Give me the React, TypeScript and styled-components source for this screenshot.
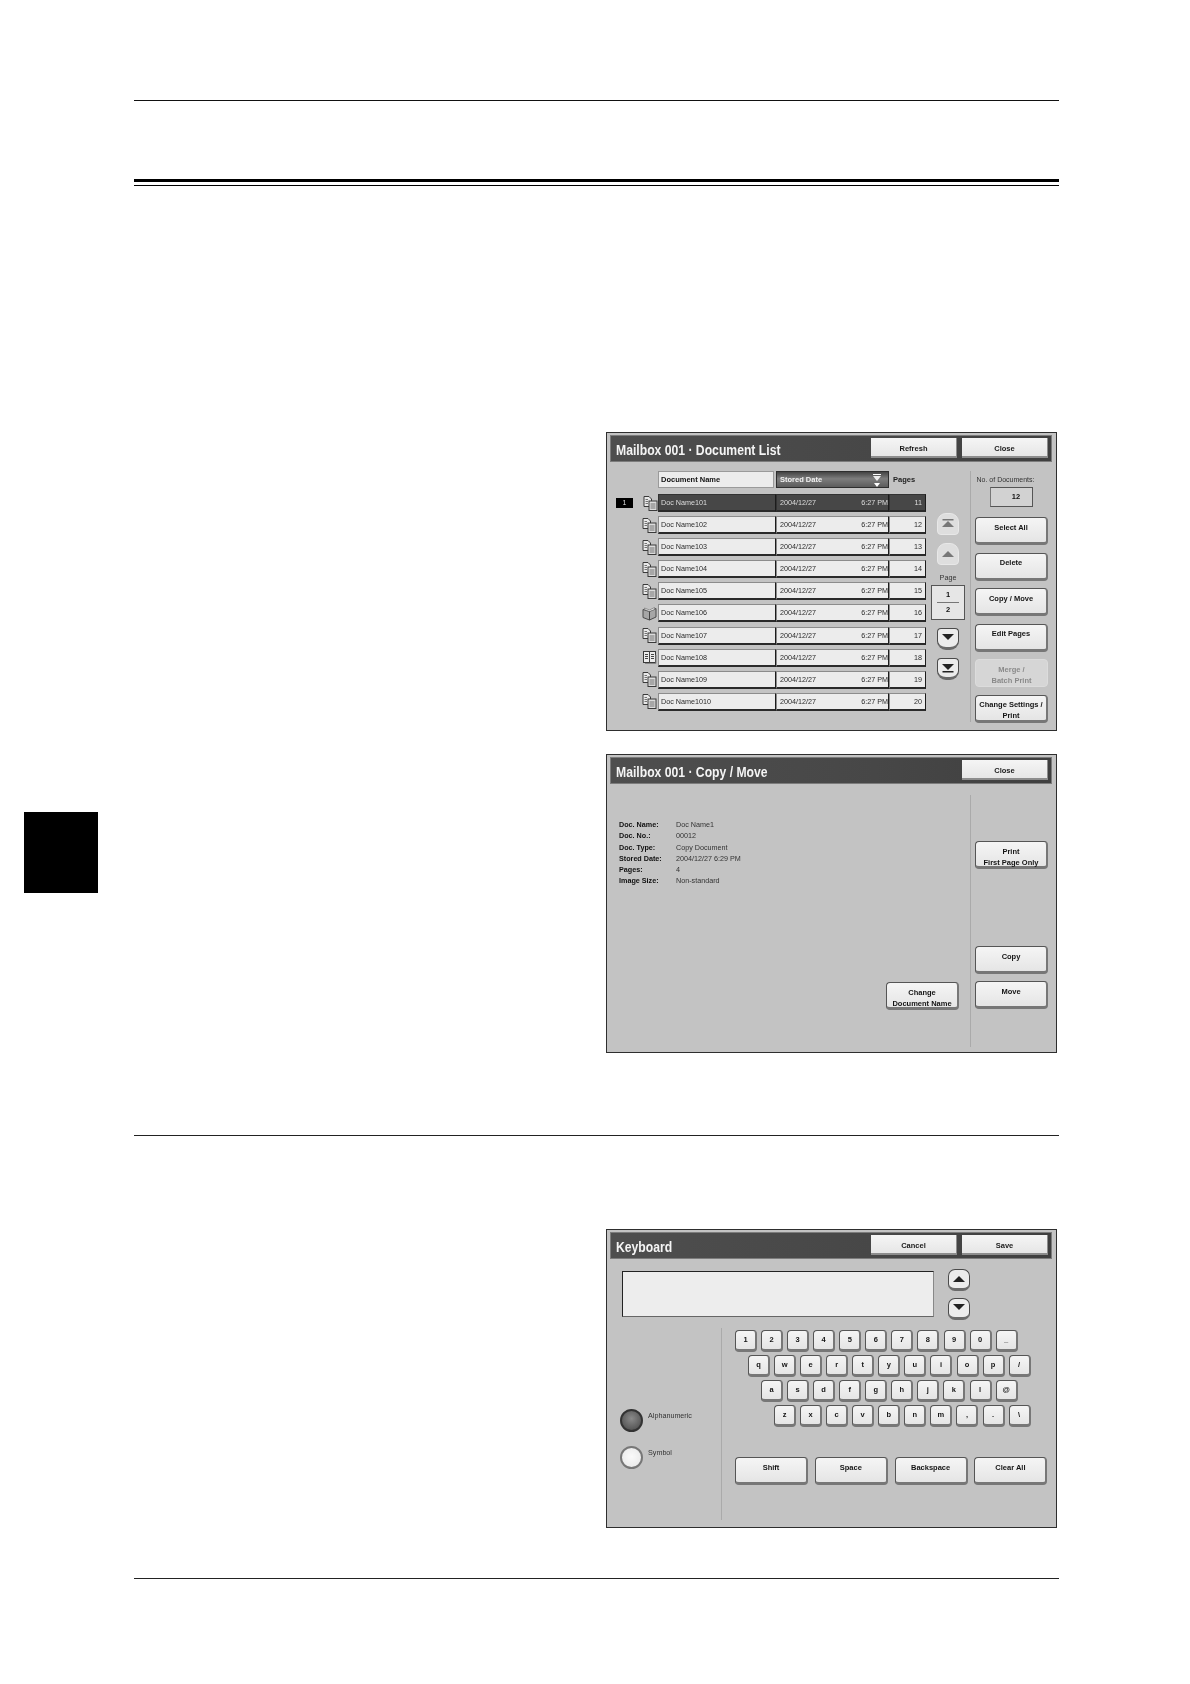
import React from 'react';
import styled, { createGlobalStyle } from 'styled-components';

const GlobalStyle = createGlobalStyle`
  html, body {
    margin: 0;
    padding: 0;
    background: #fff;
  }
  * {
    box-sizing: border-box;
  }
`;

const docs = [
  { name: 'Doc Name101', pages: 11, icon: 'copy' },
  { name: 'Doc Name102', pages: 12, icon: 'copy' },
  { name: 'Doc Name103', pages: 13, icon: 'copy' },
  { name: 'Doc Name104', pages: 14, icon: 'copy' },
  { name: 'Doc Name105', pages: 15, icon: 'copy' },
  { name: 'Doc Name106', pages: 16, icon: 'book' },
  { name: 'Doc Name107', pages: 17, icon: 'copy' },
  { name: 'Doc Name108', pages: 18, icon: 'split' },
  { name: 'Doc Name109', pages: 19, icon: 'copy' },
  { name: 'Doc Name1010', pages: 20, icon: 'copy' },
];

const sideActions = [
  { label: 'Select All' },
  { label: 'Delete' },
  { label: 'Copy / Move' },
  { label: 'Edit Pages' },
  { label: 'Merge /\nBatch Print', disabled: true },
  { label: 'Change Settings /\nPrint' },
];

const info = [
  ['Doc. Name:', 'Doc Name1'],
  ['Doc. No.:', '00012'],
  ['Doc. Type:', 'Copy Document'],
  ['Stored Date:', '2004/12/27 6:29 PM'],
  ['Pages:', '4'],
  ['Image Size:', 'Non-standard'],
];

const keyRows = ['1234567890_', 'qwertyuiop/', 'asdfghjkl@', 'zxcvbnm,.\\'];
const bigKeys = ['Shift', 'Space', 'Backspace', 'Clear All'];

function DocIcon({ kind }: { kind: string }) {
  if (kind === 'book') {
    return (
      <svg width="15" height="15" viewBox="0 0 15 15">
        <path d="M1 3.5 L7.5 5.5 L14 2.5 V11 L7.5 14 L1 11.5 Z" fill="#a6a6a6" stroke="#4a4a4a" strokeWidth="1" />
        <path d="M2.5 2 L7.5 4 L12.5 1.5 V3.5 L7.5 5.5 L2.5 3.5 Z" fill="#e8e8e8" stroke="#666" strokeWidth="0.6" />
        <path d="M7.5 5.5 V14" stroke="#444" strokeWidth="1" />
      </svg>
    );
  }
  if (kind === 'split') {
    return (
      <svg width="15" height="15" viewBox="0 0 15 15">
        <rect x="1.5" y="1.5" width="12" height="11" fill="#ececec" stroke="#3a3a3a" />
        <path d="M7.5 1.5 V12.5 M3 4.5 H6 M3 6.5 H6 M3 8.5 H6 M9 4.5 H12 M9 6.5 H12 M9 8.5 H12" stroke="#444" strokeWidth="1" />
        <path d="M3 13.5 H14 V5" fill="none" stroke="#888" strokeWidth="1" />
      </svg>
    );
  }
  return (
    <svg width="15" height="15" viewBox="0 0 15 15">
      <path d="M1 0.5 H6 L8.5 3 V10.5 H1 Z" fill="#e9e9e9" stroke="#3a3a3a" strokeWidth="1" />
      <path d="M2.5 3.5 H5 M2.5 5.5 H5 M2.5 7.5 H5" stroke="#555" strokeWidth="0.8" />
      <rect x="6" y="5" width="8" height="9.5" fill="#dcdcdc" stroke="#3a3a3a" />
      <path d="M7.5 8 H12.5 M7.5 10 H12.5 M7.5 12 H12.5" stroke="#555" strokeWidth="0.8" />
    </svg>
  );
}

function ArrowIcon({ dir, bar, color }: { dir: 'up' | 'down'; bar?: boolean; color: string }) {
  return (
    <svg width="14" height="12" viewBox="0 0 14 12">
      {dir === 'up' ? (
        <>
          {bar && <rect x="1.5" y="1" width="11" height="1.5" fill={color} />}
          <polygon points="7,3 13,9 1,9" fill={color} />
        </>
      ) : (
        <>
          <polygon points="1,2 13,2 7,8" fill={color} />
          {bar && <rect x="1.5" y="9" width="11" height="1.5" fill={color} />}
        </>
      )}
    </svg>
  );
}

function SortIcon() {
  return (
    <svg width="10" height="14" viewBox="0 0 10 14">
      <rect x="1" y="1" width="8" height="1" fill="#fff" />
      <polygon points="1,3 9,3 5,8" fill="#eee" />
      <polygon points="2,10 8,10 5,14" fill="#fff" />
    </svg>
  );
}

export default function App() {
  return (
    <Page>
      <GlobalStyle />
      <Gutter>
        <ChapterTab />
      </Gutter>
      <Column>
        <TopRule />
        <DoubleRule />

        <Panel $top={246}>
          <TitleBar>
            <TitleText>Mailbox 001 · Document List</TitleText>
            <BarButton>Refresh</BarButton>
            <BarButton>Close</BarButton>
          </TitleBar>
          <PanelBody>
            <ListArea>
              <HeaderRow>
                <NameHeader>Document Name</NameHeader>
                <DateHeader>
                  Stored Date
                  <SortIcon />
                </DateHeader>
                <PagesHeader>Pages</PagesHeader>
              </HeaderRow>
              {docs.map((doc, i) => (
                <DocRow key={doc.name}>
                  <MarkerSlot>{i === 0 && <Marker>1</Marker>}</MarkerSlot>
                  <IconSlot $selected={i === 0}>
                    <DocIcon kind={doc.icon} />
                  </IconSlot>
                  <NameCell $selected={i === 0}>{doc.name}</NameCell>
                  <DateCell $selected={i === 0}>
                    <span>2004/12/27</span>
                    <span>6:27 PM</span>
                  </DateCell>
                  <PagesCell $selected={i === 0}>{doc.pages}</PagesCell>
                </DocRow>
              ))}
            </ListArea>
            <NavColumn>
              <NavButton $shape="up" $disabled>
                <ArrowIcon dir="up" bar color="#777" />
              </NavButton>
              <NavButton $shape="up" $disabled>
                <ArrowIcon dir="up" color="#777" />
              </NavButton>
              <PageLabel>Page</PageLabel>
              <PageBox>
                <PageNumber $first>1</PageNumber>
                <PageNumber>2</PageNumber>
              </PageBox>
              <NavButton $shape="down">
                <ArrowIcon dir="down" color="#222" />
              </NavButton>
              <NavButton $shape="down">
                <ArrowIcon dir="down" bar color="#222" />
              </NavButton>
            </NavColumn>
            <SideColumn>
              <CountLabel>No. of Documents:</CountLabel>
              <CountBox>12</CountBox>
              <SideActions>
                {sideActions.map((a) => (
                  <ActionButton key={a.label} $disabled={a.disabled}>
                    {a.label}
                  </ActionButton>
                ))}
              </SideActions>
            </SideColumn>
          </PanelBody>
        </Panel>

        <Panel $top={23}>
          <TitleBar>
            <TitleText>Mailbox 001 · Copy / Move</TitleText>
            <BarButton>Close</BarButton>
          </TitleBar>
          <PanelBody>
            <DetailMain>
              <InfoGrid>
                {info.map(([label, value]) => (
                  <React.Fragment key={label}>
                    <InfoLabel>{label}</InfoLabel>
                    <InfoValue>{value}</InfoValue>
                  </React.Fragment>
                ))}
              </InfoGrid>
              <RenameButton>{'Change\nDocument Name'}</RenameButton>
            </DetailMain>
            <DetailSide>
              <PrintButton>{'Print\nFirst Page Only'}</PrintButton>
              <ActionButton>Copy</ActionButton>
              <MoveButton>Move</MoveButton>
            </DetailSide>
          </PanelBody>
        </Panel>

        <SectionRule />

        <Panel $top={93}>
          <TitleBar>
            <TitleText>Keyboard</TitleText>
            <BarButton>Cancel</BarButton>
            <BarButton>Save</BarButton>
          </TitleBar>
          <EntryRow>
            <EntryBox />
            <EntryScroll>
              <RoundButton>
                <ArrowIcon dir="up" color="#222" />
              </RoundButton>
              <RoundButton>
                <ArrowIcon dir="down" color="#222" />
              </RoundButton>
            </EntryScroll>
          </EntryRow>
          <KeyboardArea>
            <ModeColumn>
              <ModeOption>
                <Radio $on />
                <ModeLabel>Alphanumeric</ModeLabel>
              </ModeOption>
              <ModeOption>
                <Radio />
                <ModeLabel>Symbol</ModeLabel>
              </ModeOption>
            </ModeColumn>
            <KeysColumn>
              {keyRows.map((row, i) => (
                <KeyRow key={row} $indent={i * 13}>
                  {row.split('').map((k) => (
                    <Key key={k}>{k}</Key>
                  ))}
                </KeyRow>
              ))}
              <BigKeys>
                {bigKeys.map((k) => (
                  <ActionButton key={k}>{k}</ActionButton>
                ))}
              </BigKeys>
            </KeysColumn>
          </KeyboardArea>
        </Panel>

        <FooterRule />
      </Column>
    </Page>
  );
}

const Page = styled.div`
  display: flex;
  width: 1190px;
  min-height: 1684px;
  background: #fff;
  font-family: 'Liberation Sans', Arial, sans-serif;
`;

const Gutter = styled.div`
  width: 134px;
  padding: 812px 0 0 24px;
`;

const ChapterTab = styled.div`
  width: 74px;
  height: 81px;
  background: #000;
`;

const Column = styled.div`
  width: 925px;
  padding-top: 100px;
  display: flex;
  flex-direction: column;
`;

const TopRule = styled.div`
  height: 1px;
  background: #111;
`;

const DoubleRule = styled.div`
  height: 7px;
  margin-top: 78px;
  border-top: 3px solid #000;
  border-bottom: 1px solid #000;
`;

const SectionRule = styled.div`
  height: 1px;
  margin-top: 82px;
  background: #222;
`;

const FooterRule = styled.div`
  height: 1px;
  margin-top: 50px;
  background: #222;
`;

const Panel = styled.section<{ $top: number }>`
  width: 451px;
  height: 299px;
  margin: ${(p) => p.$top}px 2px 0 auto;
  border: 1px solid #2e2e2e;
  background: #c3c3c3;
  display: flex;
  flex-direction: column;
  filter: blur(0.35px);
`;

const TitleBar = styled.header`
  height: 27px;
  margin: 2px 4px 0 3px;
  padding: 2px 3px 3px 5px;
  border: 1px solid #7c7c7c;
  background: linear-gradient(to right, #4e4e4e, #474747 60%, #3f3f3f);
  display: flex;
  align-items: stretch;
  gap: 5px;
`;

const TitleText = styled.h1`
  flex: 1;
  margin: 0;
  color: #f4f4f4;
  font-size: 14px;
  font-weight: 700;
  line-height: 24px;
  white-space: nowrap;
  transform: scaleX(0.87);
  transform-origin: left center;
`;

const BarButton = styled.button`
  width: 86px;
  padding: 3px 0 0;
  border: none;
  border-right: 1px solid #8d8d8d;
  border-bottom: 2px solid #8d8d8d;
  background: linear-gradient(to bottom, #f5f5f5, #e6e6e6);
  color: #1a1a1a;
  font: 700 7.5px 'Liberation Sans', Arial, sans-serif;
`;

const PanelBody = styled.div`
  flex: 1;
  display: flex;
  min-height: 0;
`;

const ListArea = styled.div`
  width: 319px;
  padding-top: 9px;
`;

const HeaderRow = styled.div`
  display: grid;
  grid-template-columns: 116px 113px auto;
  column-gap: 2px;
  height: 17px;
  margin: 0 0 6px 51px;
`;

const NameHeader = styled.div`
  padding-left: 2px;
  border: 1px solid #9a9a9a;
  background: #ececec;
  color: #111;
  font-size: 7.5px;
  font-weight: 700;
  line-height: 15px;
`;

const DateHeader = styled.div`
  padding: 0 6px 0 3px;
  border: 1px solid #2e2e2e;
  background: linear-gradient(to bottom, #444, #7d7d7d 45%, #5c5c5c);
  color: #f2f2f2;
  font-size: 7.5px;
  font-weight: 700;
  line-height: 15px;
  display: flex;
  align-items: center;
  justify-content: space-between;
`;

const PagesHeader = styled.div`
  padding-left: 2px;
  color: #222;
  font-size: 7.5px;
  font-weight: 700;
  line-height: 17px;
`;

const DocRow = styled.div`
  display: flex;
  height: 18px;
  margin-bottom: 4.1px;
  align-items: stretch;
`;

const MarkerSlot = styled.div`
  width: 35px;
  padding-left: 9px;
  display: flex;
  align-items: center;
`;

const Marker = styled.div`
  width: 17px;
  height: 10px;
  background: #000;
  color: #ddd;
  font-size: 7px;
  line-height: 10px;
  text-align: center;
`;

const IconSlot = styled.div<{ $selected?: boolean }>`
  width: 16px;
  padding-left: ${(p) => (p.$selected ? 1 : 0)}px;
  display: flex;
  align-items: center;
`;

const Cell = styled.div<{ $selected?: boolean }>`
  border: 1px solid ${(p) => (p.$selected ? '#333' : '#8c8c8c')};
  border-right-color: #1c1c1c;
  border-bottom: 2px solid #2a2a2a;
  background: ${(p) => (p.$selected ? '#474747' : '#ececec')};
  color: ${(p) => (p.$selected ? '#ddd' : '#2a2a2a')};
  font-size: 7.2px;
  line-height: 15px;
  white-space: nowrap;
`;

const NameCell = styled(Cell)`
  width: 118px;
  padding-left: 2px;
`;

const DateCell = styled(Cell)`
  width: 113px;
  padding: 0 0 0 3px;
  display: flex;
  justify-content: space-between;
`;

const PagesCell = styled(Cell)`
  width: 37px;
  padding-right: 3px;
  text-align: right;
`;

const NavColumn = styled.div`
  width: 34px;
  margin-left: 5px;
  padding-top: 51px;
  display: flex;
  flex-direction: column;
  align-items: center;
`;

const NavButton = styled.div<{ $shape: 'up' | 'down'; $disabled?: boolean }>`
  width: 22px;
  height: 22px;
  margin-bottom: 8px;
  display: flex;
  align-items: center;
  justify-content: center;
  border-radius: ${(p) => (p.$shape === 'up' ? '9px 9px 4px 4px' : '4px 4px 9px 9px')};
  background: ${(p) => (p.$disabled ? '#dedede' : '#ececec')};
  border: 1px solid ${(p) => (p.$disabled ? '#e8e8e8' : '#4a4a4a')};
  border-bottom: ${(p) => (p.$disabled ? '1px solid #e8e8e8' : '3px solid #6a6a6a')};
`;

const PageLabel = styled.div`
  color: #333;
  font-size: 7.2px;
  line-height: 10px;
  text-align: center;
`;

const PageBox = styled.div`
  width: 34px;
  height: 35px;
  margin: 2px 0 8px;
  border: 1px solid #555;
  background: #e6e6e6;
  display: flex;
  flex-direction: column;
  padding: 2px 5px;
`;

const PageNumber = styled.div<{ $first?: boolean }>`
  flex: 1;
  color: #111;
  font-size: 7.5px;
  font-weight: 700;
  line-height: 13px;
  text-align: center;
  border-bottom: ${(p) => (p.$first ? '1px solid #777' : 'none')};
`;

const SideColumn = styled.div`
  width: 78px;
  height: 251px;
  margin: 9px 0 0 5px;
  padding: 4px 0 0 4px;
  border-left: 1px solid #aaa;
  display: flex;
  flex-direction: column;
`;

const CountLabel = styled.div`
  margin: 0 8px 0 -4px;
  color: #333;
  font-size: 7px;
  line-height: 10px;
  text-align: center;
  white-space: nowrap;
`;

const CountBox = styled.div`
  width: 43px;
  height: 21px;
  margin: 2px 0 10px 15px;
  padding-left: 9px;
  border: 1px solid #555;
  border-left-color: #777;
  background: #d2d2d2;
  color: #111;
  font-size: 7.5px;
  font-weight: 700;
  line-height: 18px;
  text-align: center;
`;

const SideActions = styled.div`
  display: flex;
  flex-direction: column;
  gap: 7.5px;
`;

const ActionButton = styled.button<{ $disabled?: boolean }>`
  width: 73px;
  height: 28px;
  padding: 3.5px 0 0;
  display: flex;
  align-items: flex-start;
  justify-content: center;
  border-radius: 4px;
  border: 1px solid ${(p) => (p.$disabled ? '#dcdcdc' : '#555')};
  border-right-width: ${(p) => (p.$disabled ? 1 : 2)}px;
  border-right-color: ${(p) => (p.$disabled ? '#dcdcdc' : '#777')};
  border-bottom-width: ${(p) => (p.$disabled ? 1 : 3)}px;
  border-bottom-color: ${(p) => (p.$disabled ? '#dcdcdc' : '#777')};
  background: ${(p) => (p.$disabled ? '#d6d6d6' : 'linear-gradient(to bottom, #f5f5f5, #e5e5e5)')};
  color: ${(p) => (p.$disabled ? '#8a8a8a' : '#141414')};
  font: 700 7.5px/11.4px 'Liberation Sans', Arial, sans-serif;
  text-align: center;
  white-space: pre;
`;

const DetailMain = styled.div`
  width: 363px;
  padding: 35px 11px 42px 12px;
  display: flex;
  flex-direction: column;
  justify-content: space-between;
`;

const InfoGrid = styled.div`
  display: grid;
  grid-template-columns: 57px auto;
  grid-auto-rows: 11.3px;
  font-size: 7.2px;
  line-height: 11.3px;
`;

const InfoLabel = styled.div`
  color: #111;
  font-weight: 700;
`;

const InfoValue = styled.div`
  color: #333;
`;

const RenameButton = styled(ActionButton)`
  align-self: flex-end;
`;

const DetailSide = styled.div`
  width: 78px;
  height: 252px;
  margin-top: 11px;
  padding: 46px 0 0 4px;
  border-left: 1px solid #aaa;
`;

const PrintButton = styled(ActionButton)`
  margin-bottom: 77px;
`;

const MoveButton = styled(ActionButton)`
  margin-top: 7px;
`;

const EntryRow = styled.div`
  display: flex;
  padding: 10px 0 0 15px;
  gap: 14px;
`;

const EntryBox = styled.div`
  width: 312px;
  height: 46px;
  margin-top: 2px;
  border: 1px solid #222;
  border-right-color: #888;
  border-bottom-color: #666;
  background: #ededed;
`;

const EntryScroll = styled.div`
  display: flex;
  flex-direction: column;
  gap: 7px;
`;

const RoundButton = styled.div`
  width: 22px;
  height: 22px;
  display: flex;
  align-items: center;
  justify-content: center;
  border: 1px solid #4a4a4a;
  border-bottom: 3px solid #6a6a6a;
  border-radius: 7px;
  background: #ececec;
`;

const KeyboardArea = styled.div`
  flex: 1;
  display: flex;
  margin-top: 8px;
  padding-bottom: 7px;
`;

const ModeColumn = styled.div`
  width: 114px;
  padding: 81px 0 0 13px;
  display: flex;
  flex-direction: column;
  gap: 14px;
`;

const ModeOption = styled.div`
  display: flex;
  gap: 5px;
`;

const Radio = styled.div<{ $on?: boolean }>`
  width: 23px;
  height: 23px;
  border-radius: 50%;
  border: 2px solid ${(p) => (p.$on ? '#333' : '#777')};
  background: ${(p) =>
    p.$on
      ? 'radial-gradient(circle at 50% 40%, #8a8a8a, #5a5a5a 70%, #444)'
      : 'radial-gradient(circle at 50% 45%, #fafafa, #ececec 70%, #cfcfcf)'};
`;

const ModeLabel = styled.div`
  margin-top: 2px;
  color: #333;
  font-size: 7.2px;
  line-height: 10px;
`;

const KeysColumn = styled.div`
  flex: 1;
  padding: 2px 0 0 13px;
  border-left: 1px solid #aaa;
`;

const KeyRow = styled.div<{ $indent: number }>`
  display: flex;
  gap: 4.07px;
  margin: 0 0 3px ${(p) => p.$indent}px;
`;

const Key = styled.div`
  width: 22px;
  height: 22px;
  display: flex;
  align-items: center;
  justify-content: center;
  padding-bottom: 1px;
  border: 1px solid #555;
  border-right: 2px solid #777;
  border-bottom: 3px solid #777;
  border-radius: 4px;
  background: linear-gradient(to bottom, #f5f5f5, #e5e5e5);
  color: #141414;
  font-size: 7.5px;
  font-weight: 700;
`;

const BigKeys = styled.div`
  display: grid;
  grid-template-columns: repeat(4, 73px);
  column-gap: 6.8px;
  margin-top: 30px;
`;
